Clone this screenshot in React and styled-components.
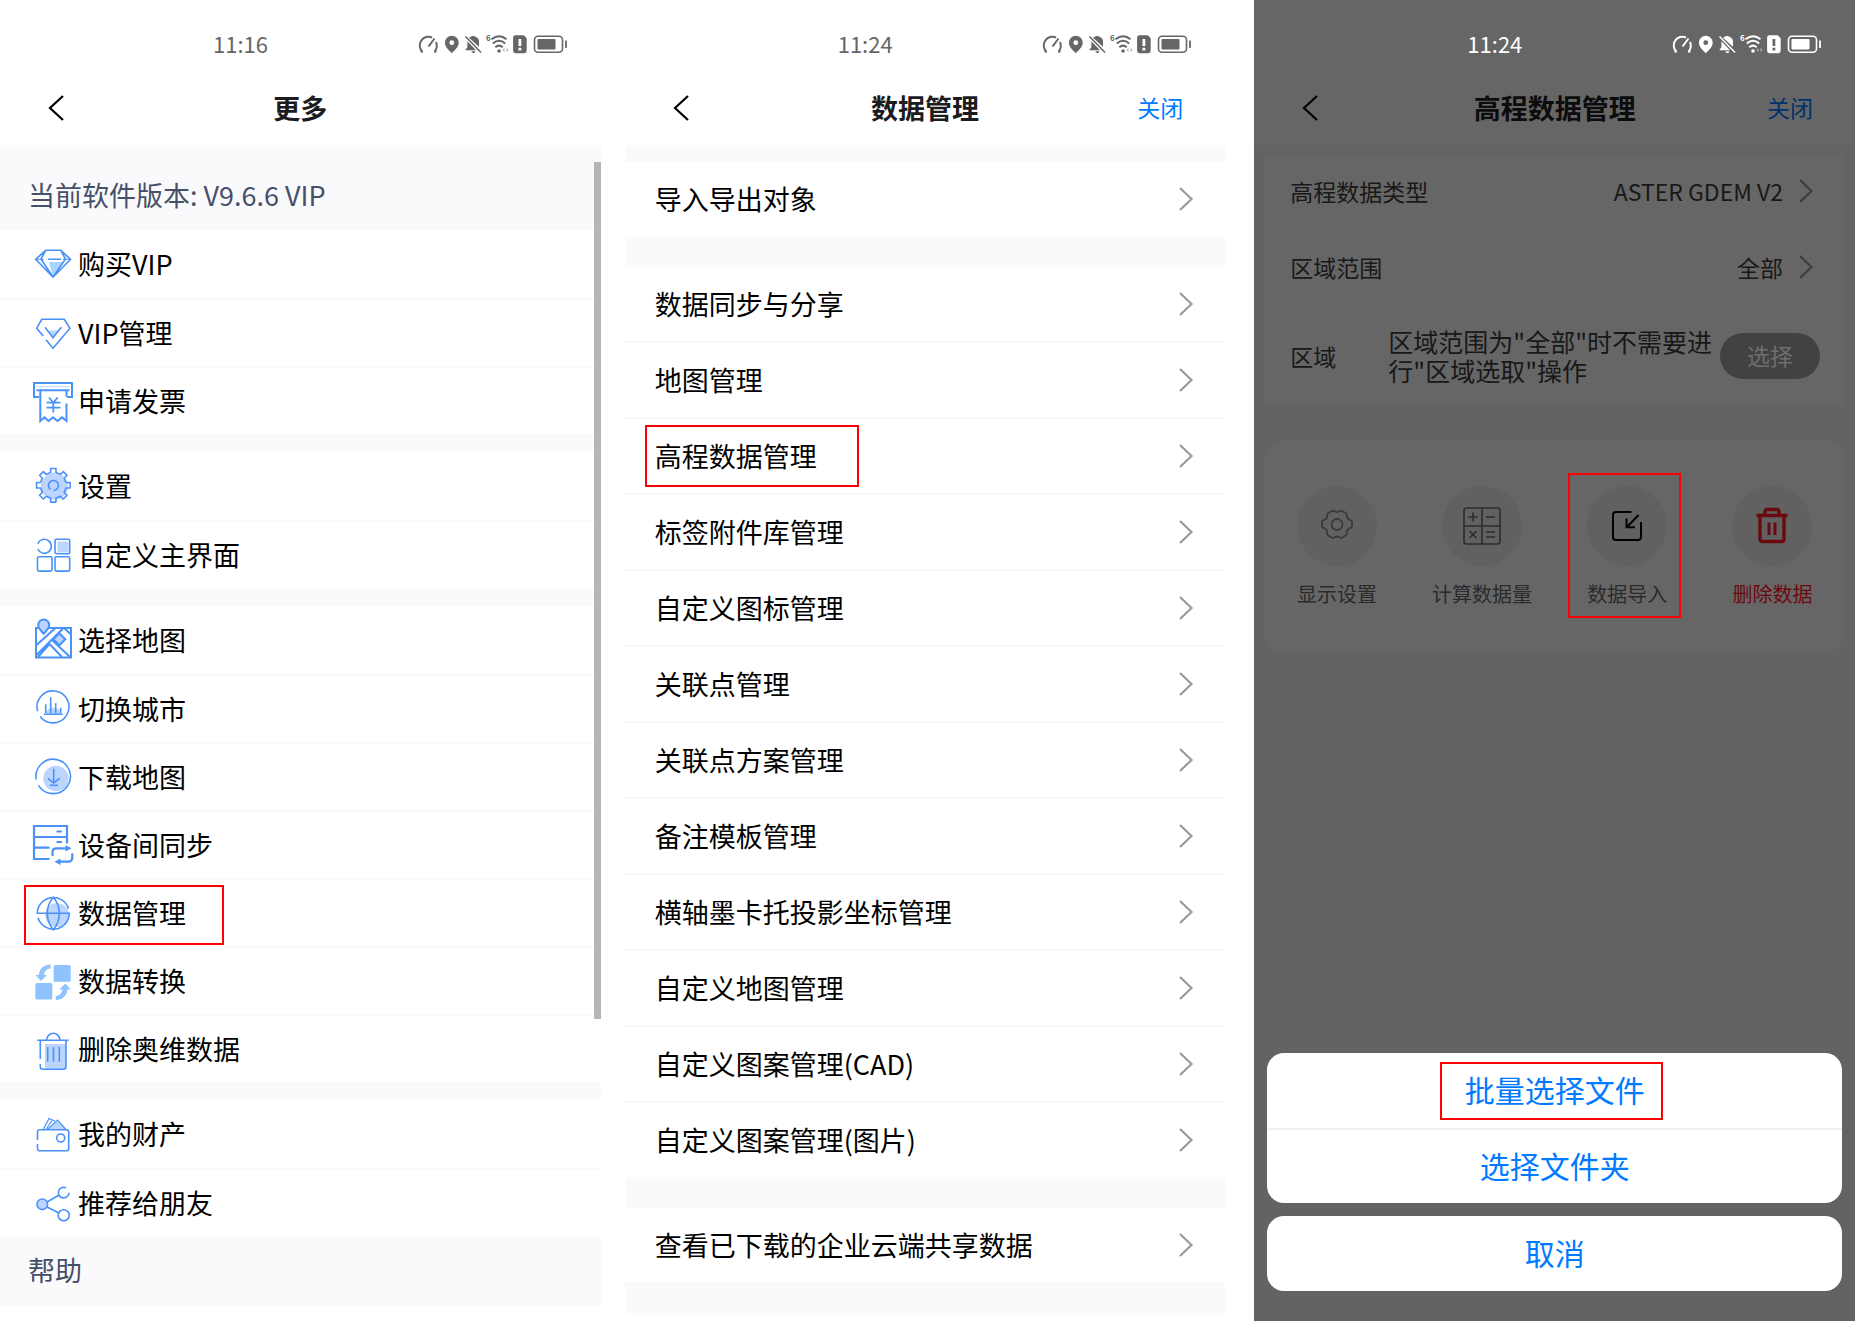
import React from 'react'
import styled, { createGlobalStyle, css } from 'styled-components'

const theme = {
  font: '"Noto Sans CJK SC", "Noto Sans", sans-serif',
  blue: '#4a92f7',
  tint: '#bcd5ff',
  link: '#007aff',
  mark: '#ff0000'
}

const GlobalStyle = createGlobalStyle`
  * {
    box-sizing: border-box;
  }

  body {
    margin: 0;
    background: #fff;
    font-family: ${theme.font};
    color: #000;
  }

  button {
    font: inherit;
    color: inherit;
    background: none;
    border: 0;
    padding: 0;
    margin: 0;
    cursor: pointer;
  }

  svg {
    display: block;
    flex: none;
    overflow: visible;
  }
`

const Board = styled.main`
  display: flex;
  gap: 24px;
  min-height: 100vh;
`

const Phone = styled.section`
  flex: 1 1 0;
  min-width: 0;
  display: flex;
  flex-direction: column;
  position: relative;
  background: #fff;

  ${({ $dimmed }) => $dimmed && css`
    margin-left: 5px;
    background: #636363;
  `}
`

const Top = styled.header`
  height: 145px;
  background: ${({ $dimmed }) => ($dimmed ? '#666' : '#fff')};
`

const StatusBar = styled.div`
  display: flex;
  justify-content: space-between;
  align-items: center;
  height: 70px;
  padding: 18px 33px 0 213px;
  color: ${({ $dimmed }) => ($dimmed ? '#fff' : '#666')};
`

const Time = styled.span`
  padding-bottom: 2px;
  font-size: 22px;
  line-height: 24px;
`

const NavBar = styled.div`
  display: grid;
  grid-template-columns: 120px 1fr 120px;
  align-items: center;
  height: 75px;
`

const BackButton = styled.button`
  justify-self: start;
  margin-left: 48px;
`

const Title = styled.h1`
  margin: 0;
  text-align: center;
  font-size: 27px;
  font-weight: 700;
  line-height: 36px;
  color: ${({ $dimmed }) => ($dimmed ? '#0c0c0c' : '#1c1c1e')};
`

const CloseButton = styled.button`
  justify-self: end;
  margin-right: 42px;
  padding-bottom: 2px;
  font-size: 23px;
  color: ${({ $dimmed }) => ($dimmed ? '#00316b' : theme.link)};
`

const Body = styled.div`
  display: flex;
  flex-direction: column;
  gap: ${({ $gap }) => $gap}px;
  padding-bottom: ${({ $bottom }) => $bottom || 0}px;
  background: #fafafc;
`

const Note = styled.p`
  margin: 0;
  padding: ${({ $first }) => ($first ? '16px 28px 1px' : '0 28px')};
  font-size: 27px;
  line-height: 68px;
  color: #475069;
`

const List = styled.ul`
  list-style: none;
  margin: 0;
  padding: 0;
  background: #fff;
`

const MenuItem = styled.li`
  position: relative;
  height: 68px;

  & + & {
    border-top: 2px solid #f9f9fb;
  }
`

const MenuButton = styled.button`
  display: flex;
  align-items: center;
  gap: 5px;
  width: 100%;
  height: 100%;
  padding-left: 33px;
  font-size: 27px;
`

const MenuName = styled.span`
  padding-bottom: 2px;
`

const LinkItem = styled.li`
  position: relative;

  & + & {
    border-top: 2px solid #f9f9fb;
  }
`

const LinkButton = styled.button`
  display: flex;
  align-items: center;
  justify-content: space-between;
  width: 100%;
  height: 74px;
  padding: 0 32px 0 30px;
  font-size: 27px;
`

const Strip = styled.div`
  height: 17px;
  background: #fafafc;
`

const Mark = styled.span`
  position: absolute;
  pointer-events: none;
  border: 2px solid ${theme.mark};
  left: ${({ $x }) => $x}px;
  top: ${({ $y }) => $y}px;
  width: ${({ $w }) => $w}px;
  height: ${({ $h }) => $h}px;
`

const Scrollbar = styled.div`
  position: absolute;
  top: 162px;
  right: 0;
  width: 7px;
  height: 857px;
  background: #b6b6b9;
`

const Card = styled.div`
  margin: 9px 10px 0;
  background: #666;
`

const Field = styled.div`
  display: flex;
  align-items: center;
  min-height: ${({ $tall }) => ($tall ? 102 : 75)}px;
  padding: ${({ $tall }) => ($tall ? '0 25px 0 26px' : '0 32px 2px 26px')};
  font-size: 23px;
  color: #181818;

  & + & {
    border-top: 2px solid #646464;
  }
`

const FieldName = styled.span`
  flex: none;
  width: ${({ $narrow }) => ($narrow ? '98px' : 'auto')};
`

const FieldValue = styled.button`
  display: flex;
  align-items: center;
  gap: 16px;
  margin-left: auto;
`

const Hint = styled.p`
  flex: 1;
  margin: 0;
  font-size: 25px;
  line-height: 29px;
`

const PickButton = styled.button`
  flex: none;
  width: 100px;
  height: 46px;
  padding-bottom: 2px;
  border-radius: 23px;
  background: #424242;
  color: #6e6e6e;
`

const Actions = styled.div`
  display: grid;
  grid-template-columns: repeat(4, 1fr);
  margin: 34px 10px 0;
  padding: 46px 0 43px;
  border-radius: 22px;
  background: #666;
`

const Action = styled.button`
  position: relative;
  display: flex;
  flex-direction: column;
  align-items: center;
  gap: 13px;
  height: 125px;
  font-size: 20px;
  line-height: 30px;
  color: ${({ $danger }) => ($danger ? '#6b0a0e' : '#2b2b2b')};
`

const Round = styled.span`
  display: flex;
  align-items: center;
  justify-content: center;
  width: 80px;
  height: 80px;
  border-radius: 50%;
  background: #616161;
`

const Sheets = styled.div`
  display: flex;
  flex-direction: column;
  gap: 13px;
  margin: auto 13px 30px;
`

const Sheet = styled.div`
  border-radius: 17px;
  background: #fff;
`

const SheetButton = styled.button`
  position: relative;
  display: block;
  width: 100%;
  height: 75px;
  padding-bottom: 3px;
  font-size: 30px;
  color: ${theme.link};

  & + & {
    border-top: 2px solid #f2f2f4;
  }
`

const gearPath = (cx, cy, outer, inner, teeth) => {
  const step = (Math.PI * 2) / teeth
  const at = (r, a) => `${(cx + r * Math.sin(a)).toFixed(2)} ${(cy - r * Math.cos(a)).toFixed(2)}`
  const points = []
  for (let i = 0; i < teeth; i++) {
    const a = i * step
    points.push(at(inner, a - step * 0.27), at(outer, a - step * 0.2), at(outer, a + step * 0.2), at(inner, a + step * 0.27))
  }
  return `M${points.join('L')}Z`
}

const StatusIcons = () => (
  <svg width="150" height="20" viewBox="0 0 150 20" fill="none" stroke="currentColor" strokeWidth="2" aria-hidden="true">
    <path d="M4.500 17.800A8.700 8.700 0 0 1 14 3.500M18 8a9.500 9.500 0 0 1-1.500 9.800" />
    <path d="M5 17.800H2.500M16 17.800h2.500" strokeWidth="1.400" />
    <path d="M10.500 12.500L16.500 4.500" />
    <path d="M33.800 1.800a6.900 6.900 0 0 0-6.900 6.900c0 4.300 4.200 7.400 6.900 10.500 2.700-3.100 6.900-6.200 6.900-10.500a6.900 6.900 0 0 0-6.900-6.900zm0 4.500a2.400 2.400 0 1 1 0 4.800 2.400 2.400 0 0 1 0-4.800z" fill="currentColor" stroke="none" />
    <path d="M52.800 2.800c.6-1.200 4-1.200 4.600 0 2.400.8 3.600 2.600 3.600 5v5L51 3.700zM49.400 7.300l8.600 9H47.200l2.200-3zM53.500 17.200h3.800a1.900 1.900 0 0 1-3.800 0z" fill="currentColor" stroke="none" />
    <path d="M47.500 2.500l15.500 16" strokeWidth="1.500" />
    <path d="M73.500 5.200c5-3.700 10.500-3.700 15 0M74.800 9.400c3.800-3.200 8.600-3.200 12.400 0M77.300 13.200c2.300-2 5.100-2 7.400 0" strokeWidth="2" />
    <circle cx="81" cy="17" r="1.800" fill="currentColor" stroke="none" />
    <path d="M86.500 14v4l-2-2zM88.500 14v4l2-2z" fill="currentColor" stroke="none" opacity=".5" />
    <text x="68" y="7" fontSize="8" fontWeight="700" fill="currentColor" stroke="none">6</text>
    <path d="M97.500 1.200h8.200l3 3v12.600a2.400 2.400 0 0 1-2.400 2.400h-8.800a2.400 2.400 0 0 1-2.400-2.400V3.600a2.400 2.400 0 0 1 2.400-2.400zM100.500 5v7h2.800V5zm0 8.800v2.600h2.800v-2.600z" fill="currentColor" stroke="none" fillRule="evenodd" />
    <rect x="116.500" y="2.200" width="28" height="16" rx="3.500" strokeWidth="1.600" />
    <rect x="119.500" y="5" width="18" height="10.400" rx="1" fill="currentColor" stroke="none" />
    <path d="M148 6.500v7.500" strokeWidth="1.800" />
  </svg>
)

const BackIcon = () => (
  <svg width="16" height="26" viewBox="0 0 16 26" fill="none" stroke="#000" strokeWidth="2.200" aria-hidden="true">
    <path d="M15 1L2 13l13 12" />
  </svg>
)

const Chevron = ({ color = '#999' }) => (
  <svg width="14" height="24" viewBox="0 0 14 24" fill="none" stroke={color} strokeWidth="2.200" aria-hidden="true">
    <path d="M1 1l11.500 11L1 23" />
  </svg>
)

const shapes = {
  diamond: (
    <>
      <path d="M16 18h15L20 33z" fill="#a9d6ff" stroke="none" />
      <path d="M12.700 6.300h15L37.600 15.300 20 33 2.700 15.300zM8 15l4.700-8.700M27.700 6.300L32.500 15 20 33 8 15M15 15.300h13" />
      <path d="M2.700 15.300H11M30 15.300h7.600" strokeWidth="1" />
    </>
  ),
  vip: (
    <>
      <path d="M14 18c4-1.500 8 1 13.500-2.500L20 24.700z" fill={theme.tint} stroke="none" />
      <path d="M10.300 23L3.700 15.300l5-9h22.600l5.700 9-17 20-7-8.600" />
      <path d="M12 14.300l8 10.400 8.300-10.400" />
    </>
  ),
  invoice: (
    <>
      <path d="M6 16H1V2h38v14h-5M3.500 9.300h33" strokeWidth="2" />
      <path d="M3 5.700h34" strokeWidth="1" stroke={theme.tint} />
      <path d="M7.300 9.300V40l4.200-3.600 4 3.600 4.500-3.600 4.500 3.600 4.500-3.600 4.500 3.600V22.500M33.500 9.300v6.500" strokeWidth="2" />
      <path d="M16 16.500l4.300 5.200 4.400-5.200M13.500 21.700h14M13.500 26.700h14M20.300 21.700V31.500" strokeWidth="1.800" />
    </>
  ),
  gear: (
    <>
      <circle cx="21.500" cy="20.300" r="13.500" fill={theme.tint} stroke="none" />
      <path d={gearPath(20.3, 19.3, 17, 13, 8)} strokeLinejoin="round" />
      <path d="M17.500 23.500a5 5 0 1 1 3 1" />
    </>
  ),
  blocks: (
    <>
      <path d="M4.800 8.600a7 7 0 1 1 0 5.400" />
      <rect x="22" y="4.300" width="14.700" height="14.400" rx="1.500" />
      <rect x="24.500" y="6.500" width="11" height="11" fill={theme.tint} stroke="none" />
      <rect x="4.500" y="21.700" width="14.500" height="14.400" rx="1.500" />
      <rect x="22" y="21.700" width="14.700" height="14.400" rx="1.500" />
    </>
  ),
  map: (
    <g strokeWidth="2">
      <path d="M5.500 8H3v29.500h35V8H16" />
      <path d="M3 25.500L22.500 8M3 35.500L30.500 8M5 37L16.500 24 29 37M19.500 20.500L37 37M31 8l7 6.500" />
      <path d="M26.300 13.300l6 6-6 6-6-6z" fill={theme.tint} />
      <path d="M10.700 13.700C8 10.500 5.200 8.500 5.200 5a5.500 5.500 0 0 1 11 0c0 3.500-2.800 5.500-5.500 8.700z" fill={theme.tint} />
    </g>
  ),
  city: (
    <>
      <path d="M12.500 25a8 8 0 0 1 15.600 0z" fill={theme.tint} stroke="none" />
      <path d="M4.600 22.300a16 16 0 1 1 2.600 5.200" />
      <path d="M11 25.300h18.700M12.700 24v-8.700M17.700 24V8.300M22.700 24v-9.700M27.700 24v-5.300" />
    </>
  ),
  download: (
    <>
      <circle cx="23" cy="21.500" r="12.700" fill={theme.tint} stroke="none" />
      <path d="M3.300 22.500a17.200 17.200 0 1 1 2.200 5.800" />
      <path d="M20.700 11.700v14M15 21.300l5.700 4.700 6-4.700M16.700 28.300H25" />
    </>
  ),
  sync: (
    <g strokeWidth="2.200">
      <path d="M34 18.500V1H1v33h15.500M1 12h33M1 22.700h15.500M23.500 6.500H29M23.500 17H29" />
      <path d="M19.500 31v-3.500c0-3 1.500-4.200 4-4.200H34M39.300 28.300V32c0 3-1.500 4.700-4 4.700H26" />
      <path d="M32.500 20l6 3.300-6 3.300zM27.500 33.400l-6 3.300 6 3.300z" fill={theme.blue} stroke="none" />
    </g>
  ),
  globe: (
    <>
      <circle cx="24" cy="22" r="12" fill={theme.tint} stroke="none" />
      <path d="M35.500 15.500A16 16 0 0 0 4.300 20.300h32A16 16 0 0 1 5 24.800" />
      <path d="M20.300 4.300c-8 9-8 23 0 32.500 8-9.500 8-23.500 0-32.500z" />
    </>
  ),
  convert: (
    <g fill="#8fc3fe" stroke="none">
      <rect x="20.700" y="4" width="17" height="16.700" rx="1.500" />
      <rect x="2.300" y="22" width="17" height="16.500" rx="1.500" />
      <path d="M17.500 3.500v4c-4 .3-6 2.800-6.700 6.500H14l-6 6-5.500-6h3.300C6.500 8 10.500 3.700 17.500 3.500zM22.700 39v-4c4-.3 6-2.800 6.700-6.500h-3.200l6.200-6 5.400 6h-3.300c-.7 6-4.800 10.300-11.800 10.500z" />
    </g>
  ),
  trash: (
    <>
      <path d="M12 15h21v25H12z" fill={theme.tint} stroke="none" />
      <path d="M4.300 11.300h31.400M13.600 11.300a6.700 7 0 0 1 13.400 0M7.300 11.300V30M33 11.300v26.500c0 1.700-1 2.500-2.500 2.500H10c-1.700 0-2.700-1-2.700-2.500V35M14.700 18v14.700M20.500 18v14.700M26.300 18v14.700" />
    </>
  ),
  wallet: (
    <>
      <path d="M16 15l9-8.500 8 8.500z" fill={theme.tint} stroke="none" />
      <path d="M10.300 15.500l5.700-11L22 7M14.500 15.500L24.500 6l8.500 9.500M19 6.500L13 15.500" strokeWidth="1.200" />
      <path d="M4.500 26v-8c0-1.500.8-2.300 2.300-2.300h26.500c1.500 0 2.400.8 2.400 2.300v16.400c0 1.500-1 2.300-2.400 2.300H6.800c-1.500 0-2.300-.8-2.300-2.300V30" />
      <circle cx="27.700" cy="24" r="4" />
    </>
  ),
  share: (
    <>
      <circle cx="9.300" cy="21.300" r="5.300" fill={theme.tint} />
      <path d="M33 4.900a5.300 5.300 0 1 0 3 4.800" />
      <circle cx="30.700" cy="32.300" r="5.500" />
      <path d="M14 19l11.800-6.800M14 24l12 6" />
    </>
  )
}

const MenuIcon = ({ name }) => (
  <svg width="40" height="40" viewBox="0 0 40 40" fill="none" stroke={theme.blue} strokeWidth="1.600" aria-hidden="true">
    {shapes[name]}
  </svg>
)

const actionShapes = {
  display: (
    <g stroke="#3a3a3a" strokeWidth="1.800">
      <path d="M13 3c2-1 2.500 1 5 1s3-2 5-1l4 2.300c1.700 1.200.2 3 1.500 5s4 1 4.500 3.200v5c-.5 2.200-3.200 1.200-4.500 3.500s.2 4-1.500 5.300l-4 2.400c-2 1-2.500-1.200-5-1.200s-3 2.200-5 1.200l-4-2.400c-1.700-1.300-.2-3-1.500-5.300S3.500 20.700 3 18.500v-5c.5-2.200 3.200-1 4.500-3.200s-.2-3.800 1.500-5z" />
      <circle cx="18" cy="16.500" r="5.500" />
    </g>
  ),
  calc: (
    <g stroke="#2c2c2c" strokeWidth="1.600">
      <rect x="0" y="0" width="36" height="36" rx="2.500" />
      <path d="M18 0v36M0 18h36M4.500 9h9M9 4.500v9M22 9h9M5.500 23l7 7M12.500 23l-7 7M22 24h9M22 29h9" />
    </g>
  ),
  load: (
    <g stroke="#000" strokeWidth="2">
      <path d="M22.500 4H7a3 3 0 0 0-3 3v22a3 3 0 0 0 3 3h22a3 3 0 0 0 3-3V14" />
      <path d="M29.500 7L18 19M17.500 10.500V19.300H26" />
    </g>
  ),
  remove: (
    <g stroke="#6b0a0e" strokeWidth="3.400">
      <path d="M2.500 7.500h31M11 7V3.500c0-1.500 1-2 2-2h10c1 0 2 .5 2 2V7M6 8v23c0 1.500 1 2.500 2.500 2.500h19c1.500 0 2.500-1 2.500-2.500V8" />
      <path d="M15 14.500V27M21 14.500V27" strokeWidth="3" />
    </g>
  )
}

const ActionIcon = ({ name }) => (
  <svg width="36" height="36" viewBox="0 0 36 36" fill="none" aria-hidden="true">
    {actionShapes[name]}
  </svg>
)

const menu = [
  [
    { icon: 'diamond', name: '购买VIP' },
    { icon: 'vip', name: 'VIP管理' },
    { icon: 'invoice', name: '申请发票' }
  ],
  [
    { icon: 'gear', name: '设置' },
    { icon: 'blocks', name: '自定义主界面' }
  ],
  [
    { icon: 'map', name: '选择地图' },
    { icon: 'city', name: '切换城市' },
    { icon: 'download', name: '下载地图' },
    { icon: 'sync', name: '设备间同步' },
    { icon: 'globe', name: '数据管理', marked: true },
    { icon: 'convert', name: '数据转换' },
    { icon: 'trash', name: '删除奥维数据' }
  ],
  [
    { icon: 'wallet', name: '我的财产' },
    { icon: 'share', name: '推荐给朋友' }
  ]
]

const links = [
  ['导入导出对象'],
  [
    '数据同步与分享',
    '地图管理',
    '高程数据管理',
    '标签附件库管理',
    '自定义图标管理',
    '关联点管理',
    '关联点方案管理',
    '备注模板管理',
    '横轴墨卡托投影坐标管理',
    '自定义地图管理',
    '自定义图案管理(CAD)',
    '自定义图案管理(图片)'
  ],
  ['查看已下载的企业云端共享数据']
]

const actions = [
  { icon: 'display', name: '显示设置' },
  { icon: 'calc', name: '计算数据量' },
  { icon: 'load', name: '数据导入', marked: true },
  { icon: 'remove', name: '删除数据', danger: true }
]

const ScreenHeader = ({ time, title, closable, dimmed }) => (
  <Top $dimmed={dimmed}>
    <StatusBar $dimmed={dimmed}>
      <Time>{time}</Time>
      <StatusIcons />
    </StatusBar>
    <NavBar>
      <BackButton aria-label="返回"><BackIcon /></BackButton>
      <Title $dimmed={dimmed}>{title}</Title>
      {closable && <CloseButton $dimmed={dimmed}>关闭</CloseButton>}
    </NavBar>
  </Top>
)

const MoreScreen = () => (
  <Phone>
    <ScreenHeader time="11:16" title="更多" />
    <Body $gap={0} $bottom={2}>
      <Note $first>当前软件版本: V9.6.6 VIP</Note>
      <Body $gap={18}>
        {menu.map(group => (
          <List key={group[0].name}>
            {group.map(item => (
              <MenuItem key={item.name}>
                <MenuButton>
                  <MenuIcon name={item.icon} />
                  <MenuName>{item.name}</MenuName>
                </MenuButton>
                {item.marked && <Mark $x={24} $y={5} $w={200} $h={60} />}
              </MenuItem>
            ))}
          </List>
        ))}
      </Body>
      <Note>帮助</Note>
    </Body>
    <Scrollbar />
  </Phone>
)

const DataScreen = () => (
  <Phone>
    <ScreenHeader time="11:24" title="数据管理" closable />
    <Strip />
    <Body $gap={31} $bottom={31}>
      {links.map(group => (
        <List key={group[0]}>
          {group.map(name => (
            <LinkItem key={name}>
              <LinkButton>
                <MenuName>{name}</MenuName>
                <Chevron />
              </LinkButton>
              {name === '高程数据管理' && <Mark $x={20} $y={6} $w={214} $h={62} />}
            </LinkItem>
          ))}
        </List>
      ))}
    </Body>
  </Phone>
)

const ElevationScreen = () => (
  <Phone $dimmed>
    <ScreenHeader time="11:24" title="高程数据管理" closable dimmed />
    <Card>
      <Field>
        <FieldName>高程数据类型</FieldName>
        <FieldValue>ASTER GDEM V2<Chevron color="#3d3d3d" /></FieldValue>
      </Field>
      <Field>
        <FieldName>区域范围</FieldName>
        <FieldValue>全部<Chevron color="#3d3d3d" /></FieldValue>
      </Field>
      <Field $tall>
        <FieldName $narrow>区域</FieldName>
        <Hint>区域范围为"全部"时不需要进行"区域选取"操作</Hint>
        <PickButton>选择</PickButton>
      </Field>
    </Card>
    <Actions>
      {actions.map(item => (
        <Action key={item.name} $danger={item.danger}>
          <Round><ActionIcon name={item.icon} /></Round>
          {item.name}
          {item.marked && <Mark $x={13} $y={-13} $w={113} $h={145} />}
        </Action>
      ))}
    </Actions>
    <Sheets>
      <Sheet>
        <SheetButton>
          批量选择文件
          <Mark $x={173} $y={9} $w={223} $h={58} />
        </SheetButton>
        <SheetButton>选择文件夹</SheetButton>
      </Sheet>
      <Sheet>
        <SheetButton>取消</SheetButton>
      </Sheet>
    </Sheets>
  </Phone>
)

const App = () => (
  <>
    <GlobalStyle />
    <Board>
      <MoreScreen />
      <DataScreen />
      <ElevationScreen />
    </Board>
  </>
)

export default App
